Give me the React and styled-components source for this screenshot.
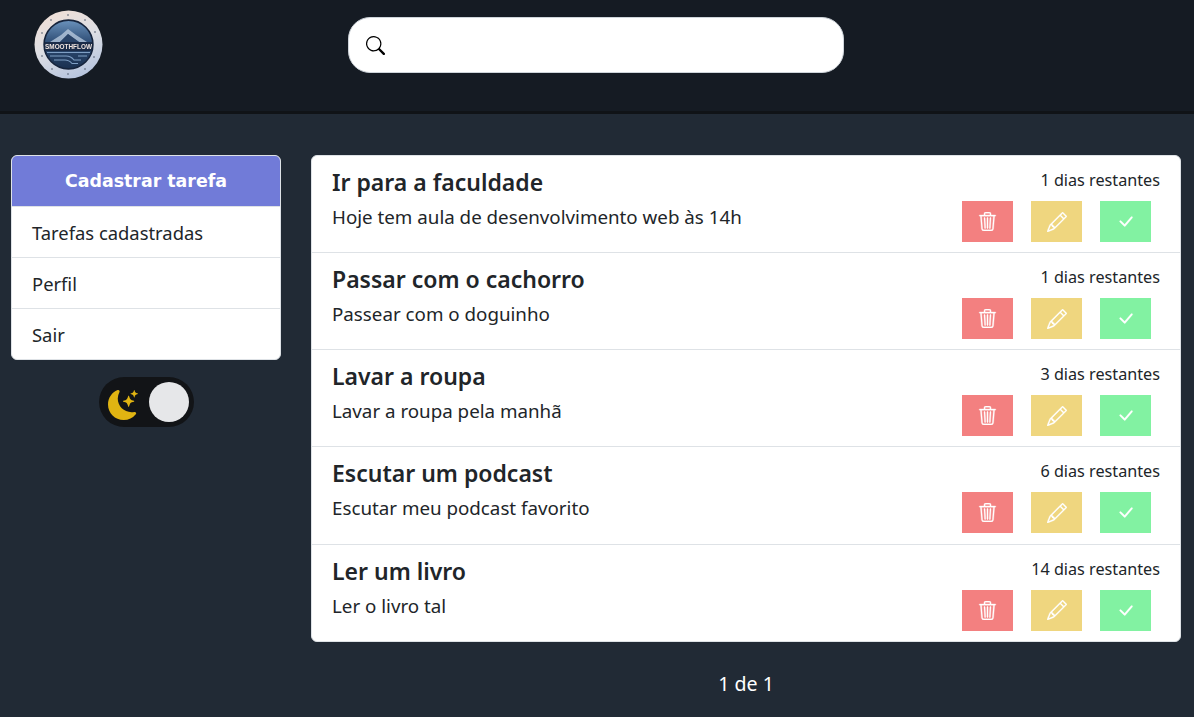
import React from "react";
import styled, { createGlobalStyle } from "styled-components";
import { BsSearch, BsTrash3, BsPencil, BsCheckLg, BsMoonStarsFill } from "react-icons/bs";

const GlobalStyle = createGlobalStyle`
  html, body {
    margin: 0;
    padding: 0;
    background: #212a35;
  }
  * {
    box-sizing: border-box;
  }
  body {
    font-family: "Noto Sans", "Open Sans", sans-serif;
    color: #212529;
  }
`;

const Page = styled.div`
  width: 1194px;
  height: 717px;
  overflow: hidden;
  background: #212a35;
`;

const TopBar = styled.header`
  height: 114px;
  background: #151b23;
  border-bottom: 3px solid #101317;
  padding: 10px 0 0 34px;
  display: flex;
  align-items: flex-start;
`;

const Logo = styled.svg`
  width: 69px;
  height: 69px;
  flex: none;
  filter: blur(0.35px);
`;

const SearchBox = styled.div`
  width: 496px;
  height: 56px;
  margin: 7px 0 0 245px;
  background: #fff;
  border: 1px solid #ced4da;
  border-radius: 22px;
  display: flex;
  align-items: center;
  padding-left: 17px;
  color: #000;
  font-size: 19px;
`;

const Content = styled.main`
  display: flex;
  align-items: flex-start;
  gap: 30px;
  padding: 41px 13px 0 11px;
`;

const Sidebar = styled.aside`
  width: 270px;
  flex: none;
  display: flex;
  flex-direction: column;
  align-items: center;
`;

const Menu = styled.nav`
  width: 100%;
  background: #fff;
  border: 1px solid #dee2e6;
  border-radius: 6px;
  overflow: hidden;
`;

const MenuItem = styled.div`
  height: 51px;
  padding-left: 20px;
  display: flex;
  align-items: center;
  font-size: 18.4px;
  color: #212529;
  border-top: ${(p) => (p.$first ? "0" : "1px solid #dee2e6")};
`;

const MenuHeader = styled(MenuItem)`
  height: 50px;
  padding: 0;
  justify-content: center;
  background: #717bd8;
  color: #fff;
  font-family: "DejaVu Sans", sans-serif;
  font-weight: 700;
  font-size: 17.4px;
`;

const Toggle = styled.div`
  width: 95px;
  height: 50px;
  margin-top: 17px;
  background: #121417;
  border-radius: 25px;
  display: flex;
  align-items: center;
  justify-content: space-between;
  padding: 0 5px 0 9px;
  color: #e0b412;
`;

const MoonIcon = styled(BsMoonStarsFill)`
  margin-top: 5px;
`;

const Knob = styled.span`
  width: 40px;
  height: 40px;
  border-radius: 50%;
  background: #e6e7e9;
`;

const Column = styled.section`
  flex: 1;
  min-width: 0;
`;

const TaskList = styled.div`
  background: #fff;
  border: 1px solid #dee2e6;
  border-radius: 6px;
  overflow: hidden;
`;

const Task = styled.article`
  height: ${(p) => (p.$first ? "96px" : "97.2px")};
  padding: 8px 20px 0 20px;
  display: flex;
  justify-content: space-between;
  border-top: ${(p) => (p.$first ? "0" : "1px solid #dee2e6")};
`;

const TaskText = styled.div`
  min-width: 0;
`;

const TaskTitle = styled.h5`
  margin: 0;
  font-size: 23px;
  line-height: 36px;
  font-weight: 600;
  color: #212529;
`;

const TaskBody = styled.p`
  margin: 0;
  font-size: 18.75px;
  line-height: 34px;
`;

const TaskSide = styled.div`
  display: flex;
  flex-direction: column;
  align-items: flex-end;
`;

const DaysLeft = styled.span`
  font-size: 16.2px;
  line-height: 32px;
`;

const Actions = styled.div`
  display: flex;
  gap: 18px;
  margin: 5px 9px 0 0;
`;

const ActionButton = styled.button`
  width: 51px;
  height: 41px;
  padding: 0;
  border: 0;
  background: ${(p) => p.$bg};
  color: #fff;
  font-size: ${(p) => p.$size}px;
  display: flex;
  align-items: center;
  justify-content: center;

  svg {
    stroke: currentColor;
    stroke-width: ${(p) => p.$stroke};
  }
`;

const Pager = styled.div`
  margin-top: 28.8px;
  text-align: center;
  color: #fff;
  font-size: 19.6px;
  line-height: 26px;
`;

const tasks = [
  { title: "Ir para a faculdade", body: "Hoje tem aula de desenvolvimento web às 14h", days: 1 },
  { title: "Passar com o cachorro", body: "Passear com o doguinho", days: 1 },
  { title: "Lavar a roupa", body: "Lavar a roupa pela manhã", days: 3 },
  { title: "Escutar um podcast", body: "Escutar meu podcast favorito", days: 6 },
  { title: "Ler um livro", body: "Ler o livro tal", days: 14 },
];

const LogoMark = () => (
  <Logo viewBox="0 0 69 69" role="img" aria-label="SmoothFlow">
    <defs>
      <linearGradient id="ring" x1="0.2" y1="0" x2="0.6" y2="1">
        <stop offset="0" stopColor="#f0dfd6" />
        <stop offset="0.5" stopColor="#dedfe4" />
        <stop offset="1" stopColor="#b7c5de" />
      </linearGradient>
      <linearGradient id="disc" x1="0" y1="0" x2="0" y2="1">
        <stop offset="0" stopColor="#6b93bd" />
        <stop offset="0.45" stopColor="#2f4e76" />
        <stop offset="1" stopColor="#1a3050" />
      </linearGradient>
    </defs>
    <circle cx="34.5" cy="34.5" r="34" fill="url(#ring)" />
    <circle cx="34.5" cy="34.5" r="24.4" fill="url(#disc)" stroke="#16243c" strokeWidth="1.6" />
    <path d="M16 32 L27 25 L34 19 L42 25 L53 32 L45 32 L34 24 L26 32 Z" fill="#b6c8dc" opacity="0.8" />
    <path d="M26 32 L34 24 L45 32 Z" fill="#2a4468" />
    <rect x="11" y="32" width="47" height="9" fill="#1b2c48" />
    <text
      x="34.5"
      y="39.3"
      textAnchor="middle"
      fontFamily="Liberation Sans, sans-serif"
      fontWeight="700"
      fontSize="6.4"
      fill="#f2e6e0"
    >
      SMOOTHFLOW
    </text>
    <path
      d="M13 42.5 H56 M16 46 H32 Q37 46 40 50 H47 M20 50 H31 Q35 50 38 53.5 H44 M44 46 H53"
      stroke="#7f9fc4"
      strokeWidth="1.1"
      fill="none"
    />
    {[[34, 5], [17, 10], [51, 10], [8, 23], [61, 22], [8, 46], [60, 47], [18, 59], [51, 59], [34, 64]].map(([cx, cy]) => (
      <circle key={`${cx}-${cy}`} cx={cx} cy={cy} r="0.8" fill="#4a5568" />
    ))}
  </Logo>
);

const App = () => (
  <Page>
    <GlobalStyle />
    <TopBar>
      <LogoMark />
      <SearchBox>
        <BsSearch />
      </SearchBox>
    </TopBar>
    <Content>
      <Sidebar>
        <Menu>
          <MenuHeader $first>Cadastrar tarefa</MenuHeader>
          <MenuItem>Tarefas cadastradas</MenuItem>
          <MenuItem>Perfil</MenuItem>
          <MenuItem>Sair</MenuItem>
        </Menu>
        <Toggle>
          <MoonIcon size={30} />
          <Knob />
        </Toggle>
      </Sidebar>
      <Column>
        <TaskList>
          {tasks.map((task, i) => (
            <Task key={task.title} $first={i === 0}>
              <TaskText>
                <TaskTitle>{task.title}</TaskTitle>
                <TaskBody>{task.body}</TaskBody>
              </TaskText>
              <TaskSide>
                <DaysLeft>{task.days} dias restantes</DaysLeft>
                <Actions>
                  <ActionButton $bg="#f38080" $size={19} $stroke={0.3}><BsTrash3 /></ActionButton>
                  <ActionButton $bg="#efd67f" $size={20} $stroke={0.2}><BsPencil /></ActionButton>
                  <ActionButton $bg="#82f2a2" $size={19} $stroke={0.2}><BsCheckLg /></ActionButton>
                </Actions>
              </TaskSide>
            </Task>
          ))}
        </TaskList>
        <Pager>1 de 1</Pager>
      </Column>
    </Content>
  </Page>
);

export default App;
